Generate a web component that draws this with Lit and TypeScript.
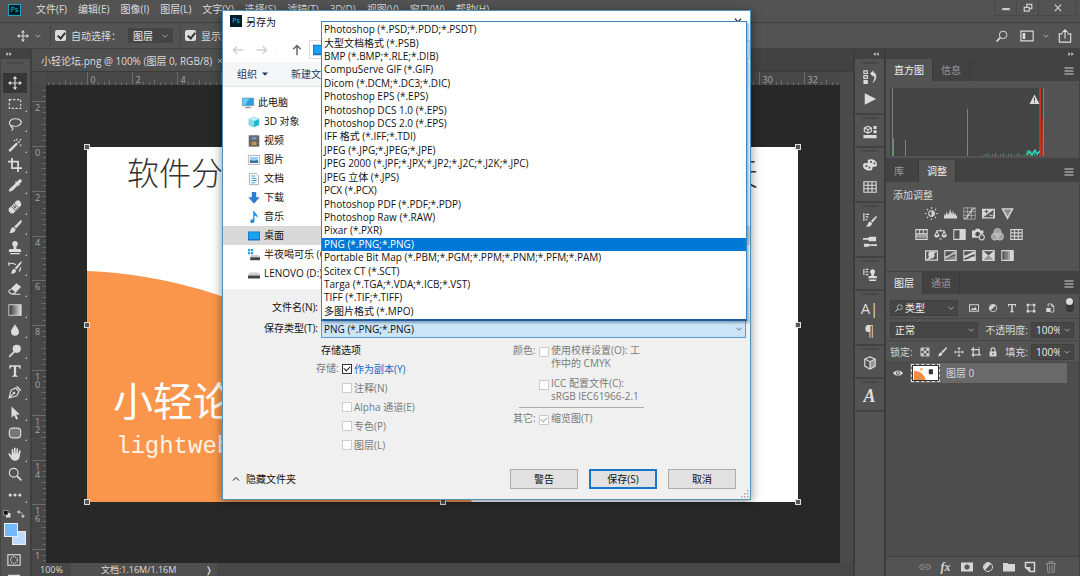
import { LitElement, html, svg, css, nothing, type TemplateResult } from "lit";
import { customElement, property } from "lit/decorators.js";
import { classMap } from "lit/directives/class-map.js";

/* Icons are drawn on a 16 x 16 grid; "s" marks stroked shapes. */
const icons: Record<string, TemplateResult<2>> = {
  move: svg`<path class="s" d="M8 2v12M2 8h12"/><path d="M8 0l2.6 3.2H5.4zM8 16l2.6-3.2H5.4zM0 8l3.2-2.6v5.2zM16 8l-3.2-2.6v5.2z"/>`,
  brush: svg`<path d="M15.4.6c.8.7.4 1.5-.3 2.4L9.2 9.8 7 7.7 13.500 1c.6-.6 1.400-.9 1.900-.4zM6.300 8.300l2.300 2.200c.1 2.600-2.400 4.800-7.600 4.200 2-.8 1.700-2.300 2.300-4 .5-1.500 1.700-2.300 3-2.400z"/>`,
  stamp: svg`<path d="M8 0a3.200 3.200 0 0 1 2.300 5.500C9.500 6.500 9.500 7.500 9.700 9H13c1.300 0 2 .8 2 2v1.500H1V11c0-1.200.7-2 2-2h3.300c.2-1.500.2-2.500-.6-3.500A3.200 3.200 0 0 1 8 0zM2.500 13.700h11V15h-11z"/>`,
  chevron: svg`<path class="s" d="M3 5.500l5 5 5-5"/>`,
  halfDisc: svg`<circle class="s" cx="8" cy="8" r="6"/><path d="M3.800 12.200A6 6 0 0 1 12.200 3.800z"/>`,
  grid: svg`<path class="s" d="M1 2h14v12H1zM1 6h14M1 10h14M5.700 2v12M10.300 2v12"/>`,
  collapse: svg`<path d="M7 3v10L1 8zM15 3v10L9 8z"/>`,
  expand: svg`<path d="M1 3v10l6-5zM9 3v10l6-5z"/>`,
  up: svg`<path class="s b" d="M2 11l6-6 6 6"/>`,
  marquee: svg`<path class="s" stroke-dasharray="2.600 1.800" d="M1.500 3h13v10h-13z"/>`,
  lasso: svg`<path class="s" d="M4.500 10.500C-.5 8 1.500 2.500 8 2s9 4 5.500 6.800C11 10.800 7 11 5 10c-2-1-2.500 1.500-.5 2s1.500 2-.5 3.500"/>`,
  wand: svg`<path d="M1 13.500L9.500 5l1.900 1.900L3 15.500c-1.300.6-2.600-.7-2-2zM11 4.800l1.700-1.600 1.200 1.200-1.700 1.600zM9.500.5h1.200V3H9.500zM14 7h1.200v2.500H14zM14.500.8l1 1-1.300 1.300-1-1zM6.500 3l1 1 1-.8-1.200-1.400z"/>`,
  crop: svg`<path class="s b" d="M4.500 0v11.500H13M0 4h11.500v12M13 11.500h3"/>`,
  dropper: svg`<path d="M10.500 3.500c1.300-3 3.200-3.800 4.600-2.600 1.400 1.400.5 3.300-2.400 4.700l.9 1-1.300 1.300-.9-.9-6.400 6.500-3.200 1L.8 13.300l1.100-2.200 6.900-6.300-.9-1L9.200 2.500z"/>`,
  bandage: svg`<path d="M1.200 9.500l8.300-8.300c1.500-1.500 3.500-.8 4.500.8s1.600 3 .8 4.500l-8.300 8.300c-1.500 1.200-3.500.4-4.600-.9-1.200-1.200-1.800-3-.7-4.400z"/><path class="d" d="M5.200 5.600l5.200 5.200M7 4l5.200 5M3.800 7.200l5 5"/><path class="d" d="M7 8h2M8 7v2"/>`,
  history: svg`<path d="M15.400.6c.6.7.2 1.500-.5 2.400l-5.200 6.800-1.900-1.700 6-6.800c.5-.6 1.100-1.100 1.600-.7zM7.300 8.800l2 1.900c.1 2.400-2.200 4.400-6.300 3.800 1.500-.8 1.200-2.200 1.900-3.800.5-1.200 1.300-1.900 2.400-1.900z"/><path class="s" d="M1 3.500c3-1.500 6-1 8 1M1 1.500v4M12.500 12c1.500-1.500 2-3 1.700-5"/>`,
  eraser: svg`<path d="M9.500 1.500l5.500 4-6 6.500-5.800-4.200z"/><path class="s" d="M3 8l-2 2.500c-.5.800 2.500 3.500 4 3.200L9 12M5 14h9"/>`,
  drop: svg`<path d="M8 1c1 3 4.500 5.500 4.500 9a4.500 4.500 0 0 1-9 0C3.500 6.500 7 4 8 1z"/>`,
  dodge: svg`<circle cx="10" cy="5.500" r="4.700"/><path d="M6.500 8l1.500 1.500-6 6L.7 14z"/>`,
  type: svg`<path d="M1.500 1.500h13v4h-1.300c-.2-1.700-.8-2.300-2.300-2.300H9.300V12c0 1.200.6 1.500 2 1.600v1.100H4.700v-1.100c1.400-.1 2-.4 2-1.600V3.200H5.100c-1.500 0-2.100.6-2.300 2.300H1.500z"/>`,
  pen: svg`<path d="M10.500 1l4.700 4.600-1.300 1.300L9.200 2.300z"/><path class="s" d="M8.500 3.500L3.500 6 1.200 14.800 10 12.300l2.500-4.800zM1.500 14.500l5-5"/><circle cx="7" cy="9" r="1.400"/>`,
  arrow: svg`<path d="M4 .5l9.500 9.300H9.300l2.200 4.700-2.200 1-2.200-4.800L4 13.500z"/>`,
  shape: svg`<rect class="s f" x="1.500" y="2.500" width="13" height="11" rx="3.500"/>`,
  hand: svg`<path d="M4.200 9.800V3.300c0-1.300 1.700-1.300 1.800 0L6.300 7h.5V1.500c0-1.400 1.900-1.400 1.900 0V7h.6l.4-4.800c.1-1.200 1.800-1.100 1.800.1l-.2 5.200h.5l1-3.200c.4-1.100 2-.6 1.700.5L13.300 11c-.6 3-2.200 4.700-5 4.700-3.200 0-4.400-1.700-5.500-3.700L.6 8.600c-.6-1.200 1-1.900 1.700-.9z"/>`,
  zoom: svg`<circle class="s" cx="6.500" cy="6.500" r="5"/><path class="s b" d="M10.200 10.200l5 5"/>`,
  search: svg`<circle class="s" cx="9.500" cy="6.500" r="5"/><path class="s b" d="M5.800 10.200l-5 5"/>`,
  dots: svg`<circle cx="2.500" cy="8" r="1.800"/><circle cx="8" cy="8" r="1.800"/><circle cx="13.500" cy="8" r="1.800"/>`,
  mask: svg`<rect class="s" x="1" y="2" width="14" height="12"/><circle class="s" stroke-dasharray="1.500 1.200" cx="8" cy="8" r="3.800"/>`,
  screen: svg`<path class="s b" d="M2 15V3h12v12"/>`,
  swap: svg`<path class="s" d="M4 4c5 0 8 3 8 8"/><path d="M5 0v8L0 4zM8 11h8l-4 5z"/>`,
  defaults: svg`<path d="M6 6h9v9H6z"/><path d="M1 1h9v9H1z" style="fill:#111;stroke:#ddd"/>`,
  workspace: svg`<path class="s" d="M1 2.500h14v11H1z"/><path d="M3 4.500h3v7H3z"/>`,
  share: svg`<path class="s" d="M5 5.500H1.500V15h13V5.500H11M8 11V1M4.800 4.200L8 1l3.200 3.200"/>`,
  minimize: svg`<path d="M2 8h12v3.500H2z"/>`,
  restore: svg`<path class="s b" d="M6 6V2h8v7h-4M2 7h8v6H2z"/>`,
  close: svg`<path class="s b" d="M3 2.500l10 10.500M13 2.500L3 13"/>`,
  states: svg`<path class="s" d="M1 1h4v3H1zM1 6.500h4v3H1z"/><path d="M.5 11.500h5V16h-5zM8 4l4-3.500v2c4.500 1.500 4.500 9-1.500 12.500 3-4 3-8 1.500-9v2z"/>`,
  play: svg`<path d="M2 1.500L15 8 2 14.500z"/>`,
  props: svg`<path class="s" d="M5.500 1.500l4 1.800v4l-4 2-4-2v-4zM1.500 3.300l4 2 4-2M5.500 5.300v4"/><path d="M12 1h3.500v3.500H12zM12 6h3.500v3.500H12zM.5 11.500h15V15H.5z"/>`,
  palette: svg`<path fill-rule="evenodd" d="M8.500 1.500c5 0 7.800 3 7.500 6.200-.3 2.400-2.500 2.200-4 2.200-1.700 0-1 2-1.500 3.200C9 15.500 0 14.500 0 8.500 0 6.500 1.500 5 3.500 5.800 5 6.500 6 5.500 5.500 3.700c-.5-1.200 1-2.200 3-2.200zM8 3.500v2h2.200v-2zm4 1.700v2h2v-2zM2.700 8.200v2H5v-2zm3.600 1.800v2h2.200v-2z"/>`,
  brushes: svg`<path d="M15.400 3.600c.6.700.2 1.500-.5 2.400l-4 4.800-1.900-1.700 5-4.900c.5-.6 1-1 1.400-.6zM8.300 9.800l2 1.900c.1 2.400-2.200 4.400-7.300 3.800 2-.8 1.700-2.200 2.900-3.800.6-1 1.300-1.900 2.400-1.900z"/><path class="s" d="M1 0v9M3 1.500h4M3 4.500h3M3 7.500h2"/>`,
  presets: svg`<path class="s b" d="M0 4.500h7M9 11.500h7"/><path d="M7 2h8v5H7c-1.500-1-1.500-4 0-5zM1 10h5l4 1.500L6 13.500H1z"/>`,
  stamps: svg`<path class="s" d="M1 1v7M3 1.500h3M3 4.500h3M3 7.500h3"/><path d="M11 1.500a2.800 2.800 0 0 1 2 4.800c-.6.700-.6 1.700-.4 2.700h1.600c1.200 0 1.800.8 1.800 1.800v1H6v-1C6 9.800 6.600 9 7.800 9h1.600c.2-1 .2-2-.4-2.700a2.800 2.800 0 0 1 2-4.800zM7 13h8v1.800H7z"/>`,
  cube: svg`<path class="s" d="M8 1l6 2.500v8L8 15l-6-3.500v-8zM2 3.500l6 3 6-3M8 6.500V15"/><path opacity=".5" d="M8 6.500l6-3v8L8 15z"/>`,
  sun: svg`<circle class="s" cx="8" cy="8" r="3.500"/><path d="M8 4.500a3.500 3.500 0 0 1 0 7z"/><path class="s" d="M8 0v2M8 14v2M0 8h2M14 8h2M2.300 2.300l1.400 1.400M12.300 12.300l1.400 1.400M2.300 13.700l1.400-1.400M12.300 3.700l1.400-1.400"/>`,
  levels: svg`<path d="M0 14v-3l1-3 1 3 1-6 1 5 1-4 1 4 1.500-8L9 9l1-5 1 6 1-5 1 5 1-3 1 4 1-1v4z"/>`,
  curves: svg`<path class="s t" d="M1 1h14v14H1zM5.700 1v14M10.300 1v14M1 5.700h14M1 10.300h14"/><path class="s" d="M1.500 14.500C8 13 8 3 14.500 1.500"/>`,
  exposure: svg`<path fill-rule="evenodd" d="M0 2h16v12H0zm1.500 10.500h12L14.500 3.500zM3 5v1.300h1.800V8H6V6.300h1.800V5H6V3.400H4.800V5z"/><path d="M9 9.500h4v1.300H9z"/>`,
  triangle: svg`<path class="s b" d="M2 2.500h12L8 13.500z"/><path opacity=".5" d="M4 4h8l-4 7z"/>`,
  hue: svg`<path class="s" d="M1 2h14v12H1zM1 7h14M5.700 2v5M10.300 2v5"/><path opacity=".6" d="M1 7h14v5H1z"/>`,
  balance: svg`<path class="s" d="M3 3.500h10M8 1.500v3M3.500 4L1 9.500h5zM12.500 4L10 9.500h5zM6.500 13.500h3"/><path d="M.5 9.500h6C6 12.500 1 12.500.5 9.500zM9.500 9.500h6c-.5 3-5.500 3-6 0z"/>`,
  bw: svg`<path class="s" d="M1 2h14v12H1z"/><path d="M8 2h7v12H8z"/>`,
  photo: svg`<path fill-rule="evenodd" d="M0 3h3.500L5 1h4l1.500 2H14v4a4.500 4.500 0 0 0-5 5H0zm7 1.500a3 3 0 1 0 .01 0z"/><circle class="s" cx="12" cy="11.500" r="3.200"/>`,
  mixer: svg`<g opacity=".6"><circle cx="8" cy="5" r="4.500"/><circle cx="5" cy="10.500" r="4.500"/><circle cx="11" cy="10.500" r="4.500"/></g><circle class="s t" cx="8" cy="5" r="4.500"/><circle class="s t" cx="5" cy="10.500" r="4.500"/><circle class="s t" cx="11" cy="10.500" r="4.500"/>`,
  invert: svg`<path fill-rule="evenodd" d="M0 1.500h16v13H0zM1.500 3v10h13V3z"/><path d="M5 3h9.500L11 6c2 2 0 5.500-3 5.500L5 13H1.500L5 10C3.500 8 4 5.500 5 3z"/>`,
  poster: svg`<path class="s" d="M1 2h14v12H1z"/><path d="M1 9c6 0 8-6 14-6v3c-6 0-8 6-14 6z" opacity=".8"/><path d="M1 14l14-7v7z" opacity=".45"/>`,
  threshold: svg`<path class="s" d="M1 2h14v12H1z"/><path d="M1 8c5 0 9-5 14-5v3C10 6 7 11 1 11zM1 14c6-1 9-5 14-5v5z"/>`,
  selective: svg`<path class="s" d="M1 2h14v12H1z"/><path d="M1 2l7 6-7 6zM15 2L8 8l7 6z"/><path d="M1 14l7-6 7 6z" opacity=".5"/>`,
  ramp: svg`<path class="s" d="M1 2h14v12H1z"/><path opacity=".3" d="M4 2h4v12H4z"/><path opacity=".6" d="M8 2h3v12H8z"/><path d="M11 2h4v12h-4z"/>`,
  image: svg`<path fill-rule="evenodd" d="M0 2h16v12H0zm1.500 1.500v9h13v-9zM3 11l2.500-4 2 2.500L10 6l3 5z"/>`,
  frame: svg`<path class="s" d="M3 3h10v10H3z"/><path d="M1 1h4v4H1zM11 1h4v4h-4zM1 11h4v4H1zM11 11h4v4h-4z"/>`,
  smart: svg`<path class="s" d="M5 6V1.500h5.500L14 5v9.500H9"/><path d="M2 8h7v6.500H2zM10 1v5h4.500z"/>`,
  checker: svg`<path class="s" d="M1.500 1.500h13v13h-13z"/><path d="M2 2h4v4H2zM10 2h4v4h-4zM6 6h4v4H6zM2 10h4v4H2zM10 10h4v4h-4z"/>`,
  artboard: svg`<path class="s b" d="M3.500 0v16M0 4h13v9M1 12.500h15M12.500 0v2"/>`,
  lock: svg`<path fill-rule="evenodd" d="M4 7V4.500a4 4 0 0 1 8 0V7h1.500v8h-11V7zm1.800 0h4.400V4.700a2.200 2.200 0 0 0-4.400 0zM7 9.500v3h2v-3z"/>`,
  eye: svg`<path fill-rule="evenodd" d="M0 8c3-5.500 13-5.500 16 0-3 5.500-13 5.500-16 0zm8-3a3 3 0 1 0 .01 0z"/><circle cx="8" cy="8" r="1.700"/>`,
  link: svg`<path class="s" d="M7 5H4a3 3 0 0 0 0 6h3M9 5h3a3 3 0 1 1 0 6H9M4.500 8h7"/>`,
  addMask: svg`<path fill-rule="evenodd" d="M0 2h16v12H0zm8 2.500a3.500 3.500 0 1 0 .01 0z"/>`,
  folder: svg`<path d="M0 2.500h6L7.500 4H16v10H0z"/>`,
  newLayer: svg`<path class="s b" d="M2 2h12v12H8L2 8.500z"/><path d="M2 8h6.500v6z"/>`,
  trash: svg`<path class="s" d="M1.500 3.500h13M5.500 3V1h5v2M3 4l.7 11h8.600L13 4M6.300 6v7M9.700 6v7"/>`,
  back: svg`<path class="s b" d="M15 8H2M7 3L2 8l5 5"/>`,
  forward: svg`<path class="s b" d="M1 8h13M9 3l5 5-5 5"/>`,
  upward: svg`<path class="s b" d="M8 15V2M3 7l5-5 5 5"/>`,
  caret: svg`<path d="M2 5h12l-6 6.500z"/>`,
  burger: svg`<path class="s" d="M2 4h12M2 8h12M2 12h12"/>`,
  /* coloured folder glyphs */
  pc: svg`<path d="M.5 1.500h15v10H.5z" style="fill:#2aa0e6;stroke:#6d8ea3"/><path d="M1 2h9L4 11H1z" style="fill:#6cc7f7"/><path d="M5 13h6l1.500 2h-9z" style="fill:#8c9aa3"/>`,
  cube3d: svg`<path d="M1 4l7-3 7 3v8l-7 3-7-3z" style="fill:#25b7d3"/><path d="M1 4l7 2.500V15l-7-3z" style="fill:#8adbe9"/><path d="M1 4l7-3 7 3-7 2.500z" style="fill:#bdeef5"/>`,
  video: svg`<path d="M1 .5h14v15H1z" style="fill:#4a4a4d"/><path d="M4.500 2h7v5h-7z" style="fill:#7e8fae"/><path d="M4.500 8.500h7v5.500h-7z" style="fill:#b8925a"/><path d="M2.700 1v14M13.300 1v14" style="stroke:#ddd;stroke-dasharray:1.500 1.500"/>`,
  picture: svg`<path d="M.5 2h15v12H.5z" style="fill:#fff;stroke:#98a5ae"/><path d="M2.500 4h11v8h-11z" style="fill:#9dd0f0"/><path d="M2.500 8l5 1 6-1v4h-11z" style="fill:#3d7191"/>`,
  document: svg`<path d="M2 .5h9L14 4v11.500H2z" style="fill:#fff;stroke:#8fa0aa"/><path d="M4.500 4h5M4.500 7h7M4.500 10h7M4.500 13h5" style="stroke:#3d9bd9;stroke-width:1.300"/>`,
  download: svg`<path d="M5 0h6v7h4.500L8 15.500.5 7H5z" style="fill:#2b7cd3"/>`,
  music: svg`<path d="M7 0h1.500c.5 3.500 5.500 4 4 10-.5-3-2-3.800-3.800-4v6.500c0 2-1.400 3.500-3.200 3.500S3 15 3 13.500 5 10.500 7 11z" style="fill:#1a8fe3"/>`,
  desktop: svg`<path d="M0 2h16v12H0z" style="fill:#1c6fb8"/><path d="M1 3h14v9H1z" style="fill:#1aa0f4"/>`,
  osDrive: svg`<path d="M0 0h3v3H0zM4 0h3v3H4zM0 4h3v3H0zM4 4h3v3H4z" style="fill:#20a5e8"/><path d="M4 8h10l2 3H3z" style="fill:#ccc"/><path d="M3 11h13v4H3z" style="fill:#444"/>`,
  drive: svg`<path d="M2 6h12l2 4H0z" style="fill:#ccc"/><path d="M0 10h16v4H0z" style="fill:#444"/>`,
};

const icon = (name: string, cls = "") => html`<svg class="icon ${cls}" viewBox="0 0 16 16" aria-hidden="true">${icons[name]}</svg>`;

const base = css`
  * { box-sizing: border-box; }
  button, input, select { font: inherit; color: inherit; margin: 0; }
  button { background: none; border: 0; padding: 0; display: flex; align-items: center; justify-content: center; }
  .icon { width: 12px; height: 12px; flex: none; fill: currentColor; display: block; overflow: visible; }
  .icon .s { fill: none; stroke: currentColor; stroke-width: 1.300; }
  .icon .b { stroke-width: 2; }
  .icon .t { stroke-width: 0.700; }
  .icon .f { fill: #777; }
  .icon .d { fill: none; stroke: #535353; stroke-width: 1; }
  .icon.micro { width: 6px; height: 6px; }
  .icon.small { width: 8px; height: 8px; }
  .icon.tiny { width: 10px; height: 10px; }
  .icon.big { width: 14px; height: 14px; }
  .icon.wide { width: 16px; height: 14px; }
  .head { display: flex; align-items: center; height: 10px; padding: 0 5px; background: #424242; color: #ccc; flex: none; }
  .head.end { justify-content: flex-end; }
`;

@customElement("ps-rulers")
class PsRuler extends LitElement {
  @property({ type: Boolean }) vertical = false;
  @property({ type: Number }) origin = 0;
  @property({ type: Number }) length = 0;

  static styles = [base, css`
    :host { display: block; overflow: hidden; background: #474747; }
    svg { display: block; width: 100%; height: 100%; font-size: 9px; }
    line { stroke: #6b6b6b; }
    text { fill: #a8a8a8; }
  `];

  render() {
    const step = 5.6;
    const first = -Math.floor(this.origin / step);
    const last = Math.floor((this.length - this.origin) / step);
    const marks = Array.from({ length: last - first + 1 }, (_, i) => i + first);
    return html`<svg>${marks.map((m) => {
      const p = Math.round(this.origin + m * step) + 0.5;
      const size = m % 8 === 0 ? 14 : m % 4 === 0 ? 5 : 3;
      const label = m % 8 === 0 ? String(Math.abs(m / 4)) : "";
      return this.vertical
        ? svg`<line x1=${14 - size} x2="14" y1=${p} y2=${p}></line>${[...label].map((c, i) => (p + 10 + i * 8 < this.length ? svg`<text x="3" y=${p + 9 + i * 8}>${c}</text>` : nothing))}`
        : svg`<line y1=${13 - size} y2="13" x1=${p} x2=${p}></line>${label ? svg`<text x=${p + 3} y="11">${label}</text>` : nothing}`;
    })}</svg>`;
  }
}

@customElement("ps-toolbox")
class PsToolbox extends LitElement {
  static styles = [base, css`
    :host { display: flex; flex-direction: column; width: 32px; flex: none; background: #535353; border-right: 2px solid #3f3f3f; border-left: 1px solid #444; color: #dcdcdc; }
    .grip { height: 2px; margin: 3px 6px 9px; background: #484848; flex: none; }
    .list { height: 432px; display: flex; flex-direction: column; justify-content: space-between; padding: 0 2px; flex: none; }
    .tool { width: 24px; height: 20px; position: relative; }
    .tool.on { background: #363636; }
    .more::after { content: ""; position: absolute; right: 0; bottom: 2px; border: 1px solid #bbb; border-left-color: transparent; border-top-color: transparent; }
    .row { display: flex; justify-content: space-between; padding: 5px 5px 5px 2px; }
    .swatches { position: relative; height: 24px; margin: 0 3px; flex: none; }
    .fore, .rear { position: absolute; width: 14px; height: 14px; border: 1px solid #eee; }
    .fore { left: 0; top: 0; background: #74b8ff; }
    .rear { left: 8px; top: 8px; background: #bcdcff; }
    .foot { display: flex; flex-direction: column; gap: 6px; align-items: center; padding: 6px 3px 0 0; }
  `];

  render() {
    const tools = ["move", "marquee", "lasso", "wand", "crop", "dropper", "bandage", "brush", "stamp", "history", "eraser", "gradient", "drop", "dodge", "type", "pen", "arrow", "shape", "hand", "zoom", "dots"];
    return html`
      <div class="head">${icon("expand", "micro")}</div>
      <div class="grip"></div>
      <div class="list">
        ${tools.map((t) => html`<button class=${classMap({ tool: true, on: t === "move", more: t !== "move" && t !== "zoom" })} aria-label=${t}>
          ${t === "gradient"
            ? html`<svg class="icon big" viewBox="0 0 16 16"><defs><linearGradient id="g"><stop stop-color="#333"/><stop offset="1" stop-color="#ddd"/></linearGradient></defs><rect x="1" y="2" width="14" height="12" fill="url(#g)" stroke="#ddd"/></svg>`
            : icon(t, "big")}
        </button>`)}
      </div>
      <div class="row">${icon("defaults", "small")}${icon("swap", "small")}</div>
      <div class="swatches"><span class="rear"></span><span class="fore"></span></div>
      <div class="foot">${icon("mask", "big")}${icon("screen", "big")}</div>
    `;
  }
}

@customElement("ps-dock")
class PsDock extends LitElement {
  static styles = [base, css`
    :host { display: flex; flex-direction: column; width: 33px; flex: none; background: #535353; border: solid #3c3c3c; border-width: 0 2px; color: #dcdcdc; }
    .groups { padding-top: 1px; }
    .group { display: flex; flex-direction: column; align-items: center; gap: 8px; padding: 10px 0 7px; border-bottom: 2px solid #424242; }
    .group::before { content: ""; width: 16px; height: 2px; background: #474747; margin: -8px 0 -2px; }
    .glyph { height: 14px; font-size: 15px; line-height: 14px; white-space: nowrap; }
    .script { font-family: "Liberation Serif", serif; font-style: italic; font-weight: bold; font-size: 18px; }
  `];

  render() {
    const glyph = (t: string, cls = "") => html`<button class="glyph ${cls}">${t}</button>`;
    const btn = (n: string) => html`<button aria-label=${n}>${icon(n, "big")}</button>`;
    return html`
      <div class="head end">${icon("collapse", "micro")}</div>
      <div class="groups">
        <div class="group">${btn("states")}${btn("play")}</div>
        <div class="group">${btn("props")}</div>
        <div class="group">${btn("palette")}${btn("grid")}</div>
        <div class="group">${btn("brushes")}${btn("presets")}</div>
        <div class="group">${btn("stamps")}</div>
        <div class="group">${glyph("A|")}${glyph("¶")}</div>
        <div class="group">${btn("cube")}</div>
        <div class="group">${glyph("A", "script")}</div>
      </div>
    `;
  }
}

@customElement("ps-panels")
class PsPanels extends LitElement {
  static styles = [base, css`
    :host { display: flex; flex-direction: column; width: 194px; flex: none; background: #535353; color: #d6d6d6; border-right: 1px solid #424242; }
    .tabs { display: flex; height: 22px; background: #424242; padding-right: 4px; flex: none; }
    .tab { padding: 0 8px; color: #999; border-right: 1px solid #3a3a3a; height: 22px; }
    .tab.on { background: #535353; color: #eee; }
    .tab:nth-child(1):not(.on) { padding-right: 14px; }
    .tabs .icon { margin: 6px 0 0 auto; }
    .histogram { padding: 7px 34px 4px 4px; height: 79px; border-bottom: 2px solid #424242; flex: none; }
    .histogram svg { display: block; width: 154px; height: 68px; background: #444; }
    .histogram .warn { fill: #ddd; }
    .adjust { height: 90px; padding: 5px 7px 0; border-bottom: 1px solid #424242; flex: none; }
    .adjust h2 { font-size: 10px; font-weight: normal; line-height: 16px; margin: 0; }
    .line { display: flex; justify-content: center; gap: 6px; height: 21px; align-items: center; padding-right: 27px; }
    .line .icon { width: 13px; height: 13px; }
    .row { display: flex; align-items: center; gap: 7px; height: 22px; padding: 0 5px 0 4px; border-bottom: 1px solid #474747; flex: none; white-space: nowrap; }
    .filter { height: 25px; padding-top: 4px; }
    .combo { display: flex; align-items: center; background: #464646; border: 1px solid #404040; height: 16px; padding: 0 2px 0 4px; }
    .combo select, .combo input { appearance: none; background: none; border: 0; padding: 0; line-height: 14px; width: 100%; outline: 0; color: #eee; }
    .kind { width: 68px; gap: 2px; }
    .blend { width: 94px; }
    .value { width: 43px; gap: 3px; }
    .field { display: flex; align-items: center; gap: 3px; margin-left: auto; }
    .switch { width: 8px; height: 14px; border-radius: 4px; background: #383838; margin-left: auto; align-self: flex-start; }
    .switch::before { content: ""; display: block; width: 7px; height: 7px; border-radius: 50%; background: #ddd; }
    .icons { display: flex; gap: 9px; padding-left: 4px; }
    .layers { flex: 1; background: #4d4d4d; padding-right: 12px; min-height: 0; }
    .layer { display: flex; align-items: center; height: 20px; }
    .vis { width: 24px; align-self: stretch; }
    .name { flex: 1; display: flex; align-items: center; gap: 7px; height: 20px; background: #696969; padding-left: 2px; }
    .thumb { width: 27px; height: 16px; border: 1px solid #333; display: block; background: #fff; outline: 1px dashed #ddd; }
    .foot { height: 20px; display: flex; align-items: center; justify-content: center; gap: 9px; border-top: 1px solid #424242; padding-left: 10px; flex: none; }
    .fx { font: italic bold 12px/12px "Liberation Serif", serif; width: 12px; }
    .dim { opacity: 0.500; }
  `];

  render() {
    const tabs = (on: string, names: string[]) => html`<div class="tabs">${names.map((n) => html`<button class=${classMap({ tab: true, on: n === on })}>${n}</button>`)}${icon("burger")}</div>`;
    const noise = Array.from({ length: 22 }, (_, i) => i);
    return html`
      <div class="head end">${icon("expand", "micro")}</div>
      ${tabs("直方图", ["直方图", "信息"])}
      <div class="histogram">
        <svg viewBox="0 0 154 68">
          <path d="M2.500 68V0M3.500 68V50M15.500 68V52M77.500 68V20M153.500 68V0" stroke="#7a857a"/>
          <path d="M1.500 17v6M77.500 17v4" stroke="#40409a"/>
          <path d="M149 68V0h2v30l1 38z" fill="#c2331f"/>
          <path d="M152.500 68V30" stroke="#a8331f"/>
          <path d="M77.500 68V50M3.500 68V62" stroke="#5f9a5f"/>
          ${noise.map((i) => svg`<path d=${`M${92.5 + i * 2.6} 68v${-1 - ((i * 7) % 3) - (i > 16 ? 3 : 0)}`} stroke=${["#4a8a4a", "#777", "#3aa06a"][i % 3]}></path>`)}
          <path d="M137 67l2-4 3 4 3-5 2 4 3-3" fill="none" stroke="#2fd6c8" stroke-width="1.500"/>
          <path class="warn" fill-rule="evenodd" d="M144.500 6.500l5 9.500h-10zM144 9.500v3.500h1V9.500zM144 14v1h1v-1z"/>
        </svg>
      </div>
      ${tabs("调整", ["库", "调整"])}
      <div class="adjust">
        <h2>添加调整</h2>
        <div class="line">${["sun", "levels", "curves", "exposure", "triangle"].map((n) => icon(n))}</div>
        <div class="line">${["hue", "balance", "bw", "photo", "mixer", "grid"].map((n) => icon(n))}</div>
        <div class="line">${["invert", "poster", "threshold", "selective", "ramp"].map((n) => icon(n))}</div>
      </div>
      ${tabs("图层", ["图层", "通道"])}
      <div class="row filter">
        <div class="combo kind">${icon("search", "small")}<select aria-label="类型"><option>类型</option></select>${icon("chevron", "small")}</div>
        <div class="icons">${["image", "halfDisc", "type", "frame", "smart"].map((n) => html`<button aria-label=${n}>${icon(n, "tiny")}</button>`)}</div>
        <span class="switch"></span>
      </div>
      <div class="row">
        <div class="combo blend"><select aria-label="混合模式"><option>正常</option></select>${icon("chevron", "small")}</div>
        <label class="field">不透明度:<span class="combo value"><input value="100%" />${icon("chevron", "small")}</span></label>
      </div>
      <div class="row">
        <span>锁定:</span>
        ${["checker", "brush", "move", "artboard", "lock"].map((n) => html`<button aria-label=${n}>${icon(n, "tiny")}</button>`)}
        <label class="field">填充:<span class="combo value"><input value="100%" />${icon("chevron", "small")}</span></label>
      </div>
      <div class="layers">
        <div class="layer">
          <button class="vis" aria-label="可见">${icon("eye", "tiny")}</button>
          <div class="name">
            <svg class="thumb" viewBox="0 0 28 17"><path d="M0 6c7 0 13 4 14 11H0z" fill="#f78b3c"/><circle cx="9" cy="4" r="1.500" fill="#f9a35f"/><path d="M18 4h5v6h-5z" fill="#333"/></svg>
            <span>图层 0</span>
          </div>
        </div>
      </div>
      <div class="foot">
        <button class="dim" aria-label="链接">${icon("link")}</button>
        <button class="fx">fx</button>
        ${["addMask", "halfDisc", "folder", "newLayer"].map((n) => html`<button aria-label=${n}>${icon(n)}</button>`)}
        <button class="dim" aria-label="删除">${icon("trash")}</button>
      </div>
    `;
  }
}

@customElement("save-dialog")
class SaveDialog extends LitElement {
  static styles = [base, css`
    :host { display: block; background: #f0f0f0; border: 1px solid #4f94b8; color: #111; box-shadow: 0 2px 10px rgba(0, 0, 0, 0.450); }
    .title { display: flex; align-items: flex-start; gap: 4px; height: 26px; padding: 4px 7px 0 7px; background: #fff; line-height: 14px; }
    .ps { width: 12px; height: 12px; background: #001d26; color: #00c8ff; font-size: 7px; line-height: 12px; text-align: center; }
    .title .close { margin: 2px 0 0 auto; color: #222; }
    .nav { display: flex; align-items: center; gap: 12px; height: 25px; padding-left: 9px; background: #fff; color: #d0d0d0; }
    .nav .upward { color: #666; margin-left: 6px; }
    .path { flex: 1; height: 19px; border: 1px solid #ddd; display: flex; align-items: center; padding-left: 2px; margin-left: -6px; }
    .nav .icon.small { margin: 0 -6px; width: 5px; }
    .bar { display: flex; align-items: center; gap: 22px; height: 25px; padding-left: 14px; background: #f4f6f8; border-bottom: 1px solid #e3e6e9; color: #1e395b; }
    .bar button { gap: 4px; }
    .tree { list-style: none; margin: 0; padding: 6px 0; background: #fff; }
    .tree li { display: flex; align-items: center; gap: 4px; height: 19px; padding-left: 25px; line-height: 19px; white-space: nowrap; }
    .tree .root { padding-left: 19px; }
    .tree .on { background: #d9d9d9; }
    .form { display: grid; grid-template-columns: 95px 1fr; column-gap: 3px; row-gap: 2px; padding: 9px 4px 0 0; }
    .form label { text-align: right; line-height: 19px; white-space: nowrap; }
    .box { position: relative; display: flex; }
    .box select, .box input { width: 100%; height: 19px; border: 1px solid #5b9bd5; background: #cce4f7; appearance: none; padding: 0 2px; border-radius: 0; }
    .box input { background: #fff; }
    .box .icon { position: absolute; right: 3px; top: 6px; color: #333; }
    .options { display: flex; gap: 99px; padding: 3px 0 0 93px; color: #7a7a7a; }
    .options h3 { margin: 0; font-size: 10px; font-weight: normal; line-height: 18px; color: #111; padding-left: 5px; }
    .save { display: grid; grid-template-columns: 22px auto; column-gap: 4px; width: 98px; align-content: start; }
    .save h3 { grid-column: 1 / 3; }
    .save label { grid-column: 2; }
    .save .key { grid-row: 2; }
    .key { line-height: 19px; white-space: nowrap; }
    label.check { display: flex; align-items: center; gap: 2px; height: 19px; line-height: 14px; white-space: nowrap; }
    .check input { appearance: none; width: 10px; height: 10px; border: 1px solid #ccc; background: #fff; flex: none; position: relative; }
    .check input:checked::after { content: ""; position: absolute; left: 2px; top: 0; width: 3px; height: 5px; border: solid #aaa; border-width: 0 1px 1px 0; transform: rotate(45deg); }
    .check .strong { border-color: #333; }
    .check .strong:checked::after { border-color: #222; }
    .link { color: #1a66cc; }
    .color { display: grid; grid-template-columns: 22px 104px; column-gap: 4px; align-content: start; }
    .color label.check { align-items: flex-start; height: 33px; line-height: 13px; padding-top: 3px; }
    .color label.check input { margin-top: 3px; }
    .color .second { grid-column: 2; }
    .color hr { grid-column: 1 / 3; width: 125px; border: 0; border-top: 1px solid #aaa; margin: 0 0 1px 6px; }
    .color label.check.one { height: 19px; }
    .foot { display: flex; align-items: center; gap: 11px; padding: 15px 14px 10px 9px; height: 45px; }
    .foot .hide { margin-right: auto; gap: 6px; }
    .foot .push { width: 68px; height: 20px; background: #e1e1e1; border: 1px solid #adadad; }
    .foot .main { border: 2px solid #1877c9; }
    .menu { position: absolute; left: 98px; right: 3px; top: 10px; height: 300px; margin: 0; padding: 1px 0; list-style: none; display: grid; grid-template-rows: repeat(22, 1fr); background: #fff; border: 1px solid #3c84c4; border-bottom: 2px solid #1f5c99; box-shadow: 2px 2px 2px rgba(30, 70, 120, 0.400); }
    .menu li { display: flex; align-items: center; padding-left: 2px; line-height: 13px; white-space: nowrap; }
    .menu .on { background: #0078d7; color: #fff; }
    .sizer { position: absolute; right: 1px; bottom: 1px; color: #aaa; }
  `];

  render() {
    const places: [string, string][] = [["pc", "此电脑"], ["cube3d", "3D 对象"], ["video", "视频"], ["picture", "图片"], ["document", "文档"], ["download", "下载"], ["music", "音乐"], ["desktop", "桌面"], ["osDrive", "半夜喝可乐 (C:)"], ["drive", "LENOVO (D:)"]];
    const formats = ["Photoshop (*.PSD;*.PDD;*.PSDT)", "大型文档格式 (*.PSB)", "BMP (*.BMP;*.RLE;*.DIB)", "CompuServe GIF (*.GIF)", "Dicom (*.DCM;*.DC3;*.DIC)", "Photoshop EPS (*.EPS)", "Photoshop DCS 1.0 (*.EPS)", "Photoshop DCS 2.0 (*.EPS)", "IFF 格式 (*.IFF;*.TDI)", "JPEG (*.JPG;*.JPEG;*.JPE)", "JPEG 2000 (*.JPF;*.JPX;*.JP2;*.J2C;*.J2K;*.JPC)", "JPEG 立体 (*.JPS)", "PCX (*.PCX)", "Photoshop PDF (*.PDF;*.PDP)", "Photoshop Raw (*.RAW)", "Pixar (*.PXR)", "PNG (*.PNG;*.PNG)", "Portable Bit Map (*.PBM;*.PGM;*.PPM;*.PNM;*.PFM;*.PAM)", "Scitex CT (*.SCT)", "Targa (*.TGA;*.VDA;*.ICB;*.VST)", "TIFF (*.TIF;*.TIFF)", "多图片格式 (*.MPO)"];
    const current = "PNG (*.PNG;*.PNG)";
    return html`
      <div class="title"><span class="ps">Ps</span><span>另存为</span><button class="close" aria-label="关闭">${icon("close", "tiny")}</button></div>
      <div class="nav">${icon("back")}${icon("forward")}${icon("chevron", "small")}<span class="upward">${icon("upward")}</span><span class="path">${icon("desktop", "wide")}</span></div>
      <div class="bar"><button>组织 ${icon("caret", "small")}</button><button>新建文件夹</button></div>
      <ul class="tree">${places.map(([i, n]) => html`<li class=${classMap({ root: i === "pc", on: i === "desktop" })}>${icon(i)}${n}</li>`)}</ul>
      <div class="form">
        <label for="name">文件名(N):</label><div class="box"><input id="name" /></div>
        <label for="kind">保存类型(T):</label><div class="box"><select id="kind"><option>${current}</option></select>${icon("chevron", "small")}</div>
      </div>
      <div class="options">
        <div class="save">
          <h3>存储选项</h3>
          <span class="key">存储:</span>
          <label class="check link"><input class="strong" type="checkbox" checked />作为副本(Y)</label>
          ${["注释(N)", "Alpha 通道(E)", "专色(P)", "图层(L)"].map((t) => html`<label class="check"><input type="checkbox" disabled />${t}</label>`)}
        </div>
        <div class="color">
          <span class="key">颜色:</span>
          <label class="check"><input type="checkbox" disabled /><span>使用校样设置(O): 工<br />作中的 CMYK</span></label>
          <label class="check second"><input type="checkbox" disabled /><span>ICC 配置文件(C):<br />sRGB IEC61966-2.1</span></label>
          <hr />
          <span class="key">其它:</span>
          <label class="check one"><input type="checkbox" checked disabled />缩览图(T)</label>
        </div>
      </div>
      <div class="foot">
        <button class="hide">${icon("up", "small")}隐藏文件夹</button>
        <button class="push">警告</button><button class="push main">保存(S)</button><button class="push">取消</button>
      </div>
      <svg class="icon small sizer" viewBox="0 0 8 8"><path d="M6 0h1.500v1.500H6zM6 3h1.500v1.500H6zM6 6h1.500v1.500H6zM3 3h1.500v1.500H3zM3 6h1.500v1.500H3zM0 6h1.500v1.500H0z"/></svg>
      <ul class="menu" role="listbox">${formats.map((f) => html`<li role="option" class=${classMap({ on: f === current })}>${f}</li>`)}</ul>
    `;
  }
}

@customElement("app-root")
class AppRoot extends LitElement {
  static styles = [base, css`
    :host { display: flex; flex-direction: column; height: 100vh; overflow: hidden; position: relative; background: #535353; color: #dcdcdc; font: 10px/14px "Open Sans", "Noto Sans CJK SC", sans-serif; }
    .menubar { display: flex; align-items: flex-start; gap: 11px; height: 23px; padding: 2px 3px 0 8px; border-bottom: 1px solid #3e3e3e; flex: none; white-space: nowrap; }
    .logo { width: 13px; height: 12px; margin: 2px 4px 0 0; border: 1px solid #1fa4c0; background: #001d26; color: #00c8ff; font-size: 7px; line-height: 10px; text-align: center; }
    .window { display: flex; margin: -2px 0 0 auto; border: 1px solid #484848; border-top: 0; }
    .window button { width: 22px; height: 15px; border-right: 1px solid #484848; color: #ccc; }
    .window button:last-child { width: 37px; border: 0; }
    .options { display: flex; align-items: center; height: 26px; padding: 0 8px 0 17px; border-bottom: 1px solid #424242; flex: none; white-space: nowrap; }
    .options .chev { margin: 0 8px 0 5px; }
    .options .rule { width: 1px; height: 20px; background: #444; }
    .options label { display: flex; align-items: center; gap: 5px; margin: 0 7px 0 4px; }
    .options label input { appearance: none; width: 11px; height: 11px; border-radius: 2px; background: #dcdcdc; position: relative; }
    .options label input::after { content: ""; position: absolute; left: 4px; top: 1px; width: 3px; height: 6px; border: solid #333; border-width: 0 2px 2px 0; transform: rotate(40deg); }
    .pick { display: flex; align-items: center; width: 45px; height: 15px; background: #444; padding: 0 4px 0 5px; margin-right: 7px; }
    .pick select { appearance: none; background: none; border: 0; padding: 0; width: 100%; color: #eee; }
    .end { margin-left: auto; display: flex; align-items: center; gap: 12px; }
    .end .small { margin: 0 -4px; }
    .body { display: flex; flex: 1; min-height: 0; }
    .doc { flex: 1; min-width: 0; display: flex; flex-direction: column; background: #424242; }
    .tabs { display: flex; height: 23px; flex: none; border-bottom: 1px solid #3c3c3c; }
    .tab { display: flex; align-items: center; gap: 5px; padding: 2px 9px 0; background: #4f4f4f; white-space: nowrap; }
    .stage { flex: 1; display: grid; grid-template: 13px 1fr / 14px 1fr 13px; min-height: 0; }
    .corner, .scroll { background: #4a4a4a; }
    .scroll { grid-row: 1 / 3; grid-column: 3; }
    .canvas { position: relative; background: #282828; overflow: hidden; min-width: 0; }
    .art { position: absolute; left: 41px; top: 62px; width: 711px; height: 355px; display: block; }
    .handles { fill: #555; stroke: #ddd; }
    .thin { font-family: "Noto Sans CJK SC", sans-serif; font-weight: 200; font-size: 32px; fill: #333; }
    .heavy { font-family: "Noto Sans CJK SC", sans-serif; font-weight: 400; font-size: 40px; fill: #fff; }
    .mono { font-family: "Liberation Mono", monospace; font-size: 24px; fill: #fff3e6; }
    .status { display: flex; align-items: center; height: 13px; background: #474747; padding-left: 8px; flex: none; line-height: 13px; font-size: 9px; }
    .status .info { width: 146px; display: flex; justify-content: space-between; margin-left: 8px; padding: 0 4px 0 30px; background: #4f4f4f; }
    save-dialog { position: absolute; left: 222px; top: 10px; width: 529px; }
  `];

  render() {
    const menus = ["文件(F)", "编辑(E)", "图像(I)", "图层(L)", "文字(Y)", "选择(S)", "滤镜(T)", "3D(D)", "视图(V)", "窗口(W)", "帮助(H)"];
    const handles = [[0, 0], [711, 0], [0, 178], [711, 178], [0, 355], [356, 355], [711, 355]];
    return html`
      <div class="menubar">
        <span class="logo">Ps</span>
        ${menus.map((m) => html`<button>${m}</button>`)}
        <div class="window">${["minimize", "restore", "close"].map((n) => html`<button aria-label=${n}>${icon(n, "tiny")}</button>`)}</div>
      </div>
      <div class="options">
        ${icon("move")}${icon("chevron", "small chev")}<span class="rule"></span>
        <label><input type="checkbox" checked />自动选择：</label>
        <div class="pick"><select aria-label="自动选择"><option>图层</option></select>${icon("chevron", "small")}</div>
        <span class="rule"></span>
        <label><input type="checkbox" checked />显示变换控件</label>
        <div class="end">${icon("search")}${icon("workspace", "big")}${icon("chevron", "small")}${icon("share", "big")}</div>
      </div>
      <div class="body">
        <ps-toolbox></ps-toolbox>
        <div class="doc">
          <div class="tabs"><div class="tab"><span>小轻论坛.png @ 100% (图层 0, RGB/8)</span>${icon("close", "micro")}</div></div>
          <div class="stage">
            <div class="corner"></div>
            <ps-rulers .origin=${41} .length=${793}></ps-rulers>
            <div class="scroll"></div>
            <ps-rulers vertical .origin=${61} .length=${478}></ps-rulers>
            <div class="canvas">
              <svg class="art" viewBox="0 0 711 355" overflow="visible">
                <rect width="711" height="355" fill="#fff"/>
                <path d="M0 124A466 466 0 0 1 385 355H0z" fill="#fa964b"/>
                <text class="thin" x="40" y="38">软件分享</text>
                <text class="thin" x="639" y="38">天</text>
                <text class="heavy" x="26" y="269">小轻论坛</text>
                <text class="mono" x="29" y="306">lightweb</text>
                <g class="handles">${handles.map(([x, y]) => svg`<rect x=${x - 2.5} y=${y - 2.5} width="5" height="5"></rect>`)}</g>
              </svg>
            </div>
          </div>
          <div class="status"><span>100%</span><span class="info"><span>文档:1.16M/1.16M</span><span>❭</span></span></div>
        </div>
        <ps-dock></ps-dock>
        <ps-panels></ps-panels>
      </div>
      <save-dialog></save-dialog>
    `;
  }
}
